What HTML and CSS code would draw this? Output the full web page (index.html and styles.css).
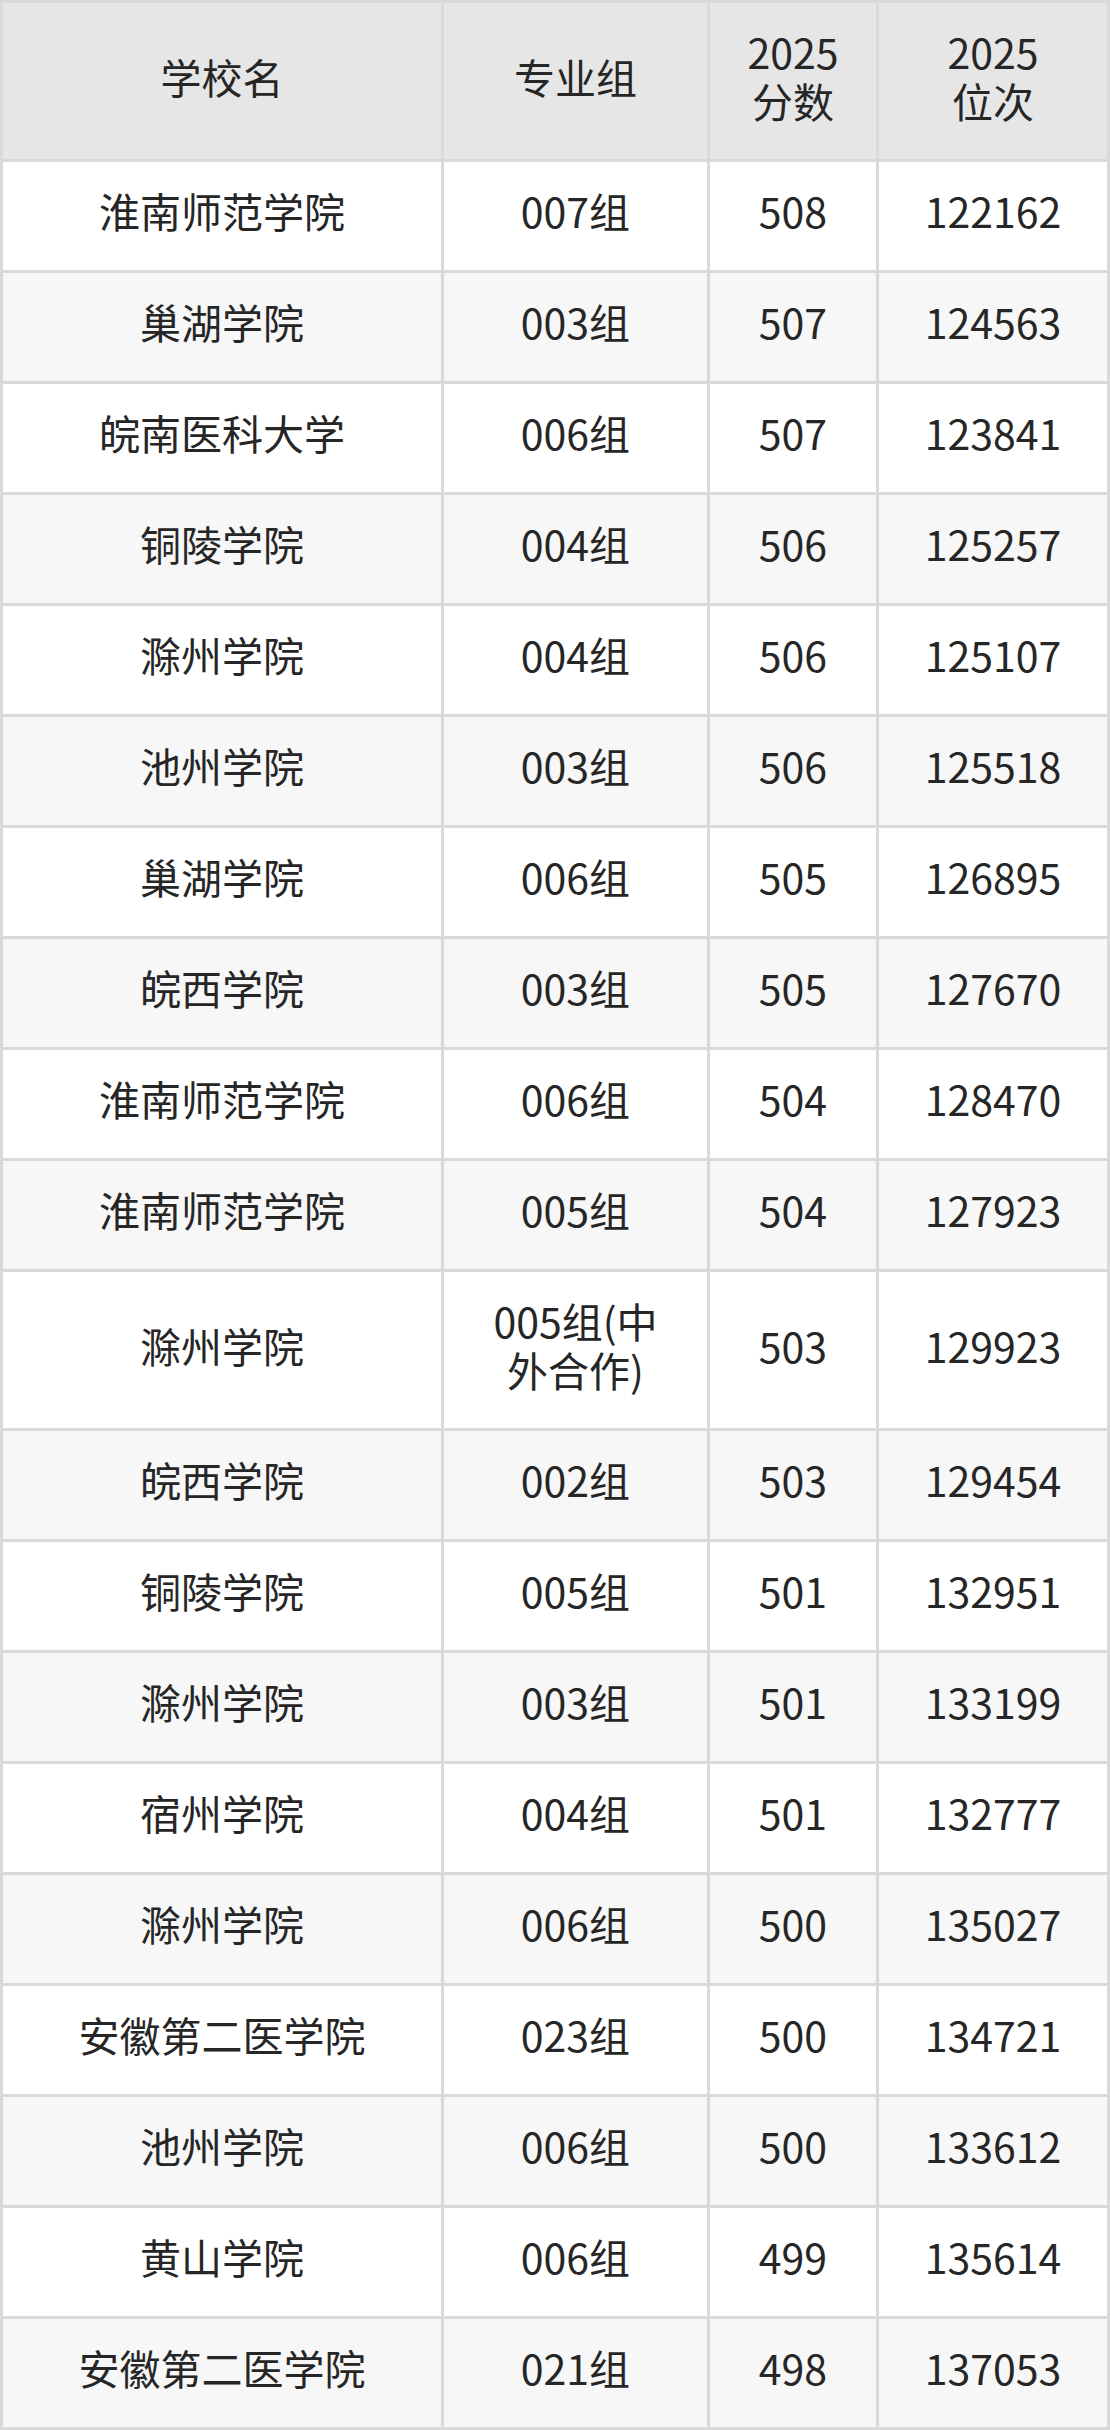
FILE: index.html
```html
<!DOCTYPE html>
<html lang="zh-CN">
<head>
<meta charset="utf-8">
<title>录取分数</title>
<link rel="stylesheet" href="styles.css">
</head>
<body>
<div class="table">
  <div class="row head">
    <div class="cell">学校名</div>
    <div class="cell">专业组</div>
    <div class="cell">2025<br>分数</div>
    <div class="cell">2025<br>位次</div>
  </div>
  <div class="row"><div class="cell">淮南师范学院</div><div class="cell">007组</div><div class="cell">508</div><div class="cell">122162</div></div>
  <div class="row alt"><div class="cell">巢湖学院</div><div class="cell">003组</div><div class="cell">507</div><div class="cell">124563</div></div>
  <div class="row"><div class="cell">皖南医科大学</div><div class="cell">006组</div><div class="cell">507</div><div class="cell">123841</div></div>
  <div class="row alt"><div class="cell">铜陵学院</div><div class="cell">004组</div><div class="cell">506</div><div class="cell">125257</div></div>
  <div class="row"><div class="cell">滁州学院</div><div class="cell">004组</div><div class="cell">506</div><div class="cell">125107</div></div>
  <div class="row alt"><div class="cell">池州学院</div><div class="cell">003组</div><div class="cell">506</div><div class="cell">125518</div></div>
  <div class="row"><div class="cell">巢湖学院</div><div class="cell">006组</div><div class="cell">505</div><div class="cell">126895</div></div>
  <div class="row alt"><div class="cell">皖西学院</div><div class="cell">003组</div><div class="cell">505</div><div class="cell">127670</div></div>
  <div class="row"><div class="cell">淮南师范学院</div><div class="cell">006组</div><div class="cell">504</div><div class="cell">128470</div></div>
  <div class="row alt"><div class="cell">淮南师范学院</div><div class="cell">005组</div><div class="cell">504</div><div class="cell">127923</div></div>
  <div class="row tall"><div class="cell">滁州学院</div><div class="cell">005组(中<br>外合作)</div><div class="cell">503</div><div class="cell">129923</div></div>
  <div class="row alt"><div class="cell">皖西学院</div><div class="cell">002组</div><div class="cell">503</div><div class="cell">129454</div></div>
  <div class="row"><div class="cell">铜陵学院</div><div class="cell">005组</div><div class="cell">501</div><div class="cell">132951</div></div>
  <div class="row alt"><div class="cell">滁州学院</div><div class="cell">003组</div><div class="cell">501</div><div class="cell">133199</div></div>
  <div class="row"><div class="cell">宿州学院</div><div class="cell">004组</div><div class="cell">501</div><div class="cell">132777</div></div>
  <div class="row alt"><div class="cell">滁州学院</div><div class="cell">006组</div><div class="cell">500</div><div class="cell">135027</div></div>
  <div class="row"><div class="cell">安徽第二医学院</div><div class="cell">023组</div><div class="cell">500</div><div class="cell">134721</div></div>
  <div class="row alt"><div class="cell">池州学院</div><div class="cell">006组</div><div class="cell">500</div><div class="cell">133612</div></div>
  <div class="row"><div class="cell">黄山学院</div><div class="cell">006组</div><div class="cell">499</div><div class="cell">135614</div></div>
  <div class="row alt"><div class="cell">安徽第二医学院</div><div class="cell">021组</div><div class="cell">498</div><div class="cell">137053</div></div>
</div>
</body>
</html>
```

FILE: styles.css
```css
html, body {
  margin: 0;
  padding: 0;
  background: #ffffff;
}

.table {
  display: grid;
  grid-template-columns: 441px 266px 169px 231px;
  width: 1110px;
  box-sizing: border-box;
  border-top: 3px solid #d9d9d9;
  border-left: 3px solid #d9d9d9;
  font-family: "Noto Sans CJK SC", "Noto Sans", sans-serif;
  font-size: 41px;
  line-height: 49px;
  color: #262626;
}

.row {
  display: contents;
}

.cell {
  display: flex;
  align-items: center;
  justify-content: center;
  text-align: center;
  box-sizing: border-box;
  padding: 24px 6px 35px;
  border-right: 3px solid #d9d9d9;
  border-bottom: 3px solid #d9d9d9;
  background: #ffffff;
}

.row.head .cell,
.row.tall .cell {
  padding-bottom: 34px;
}

.row.alt .cell {
  background: #f7f7f7;
}

.row.head .cell {
  background: #e6e6e6;
}
```
